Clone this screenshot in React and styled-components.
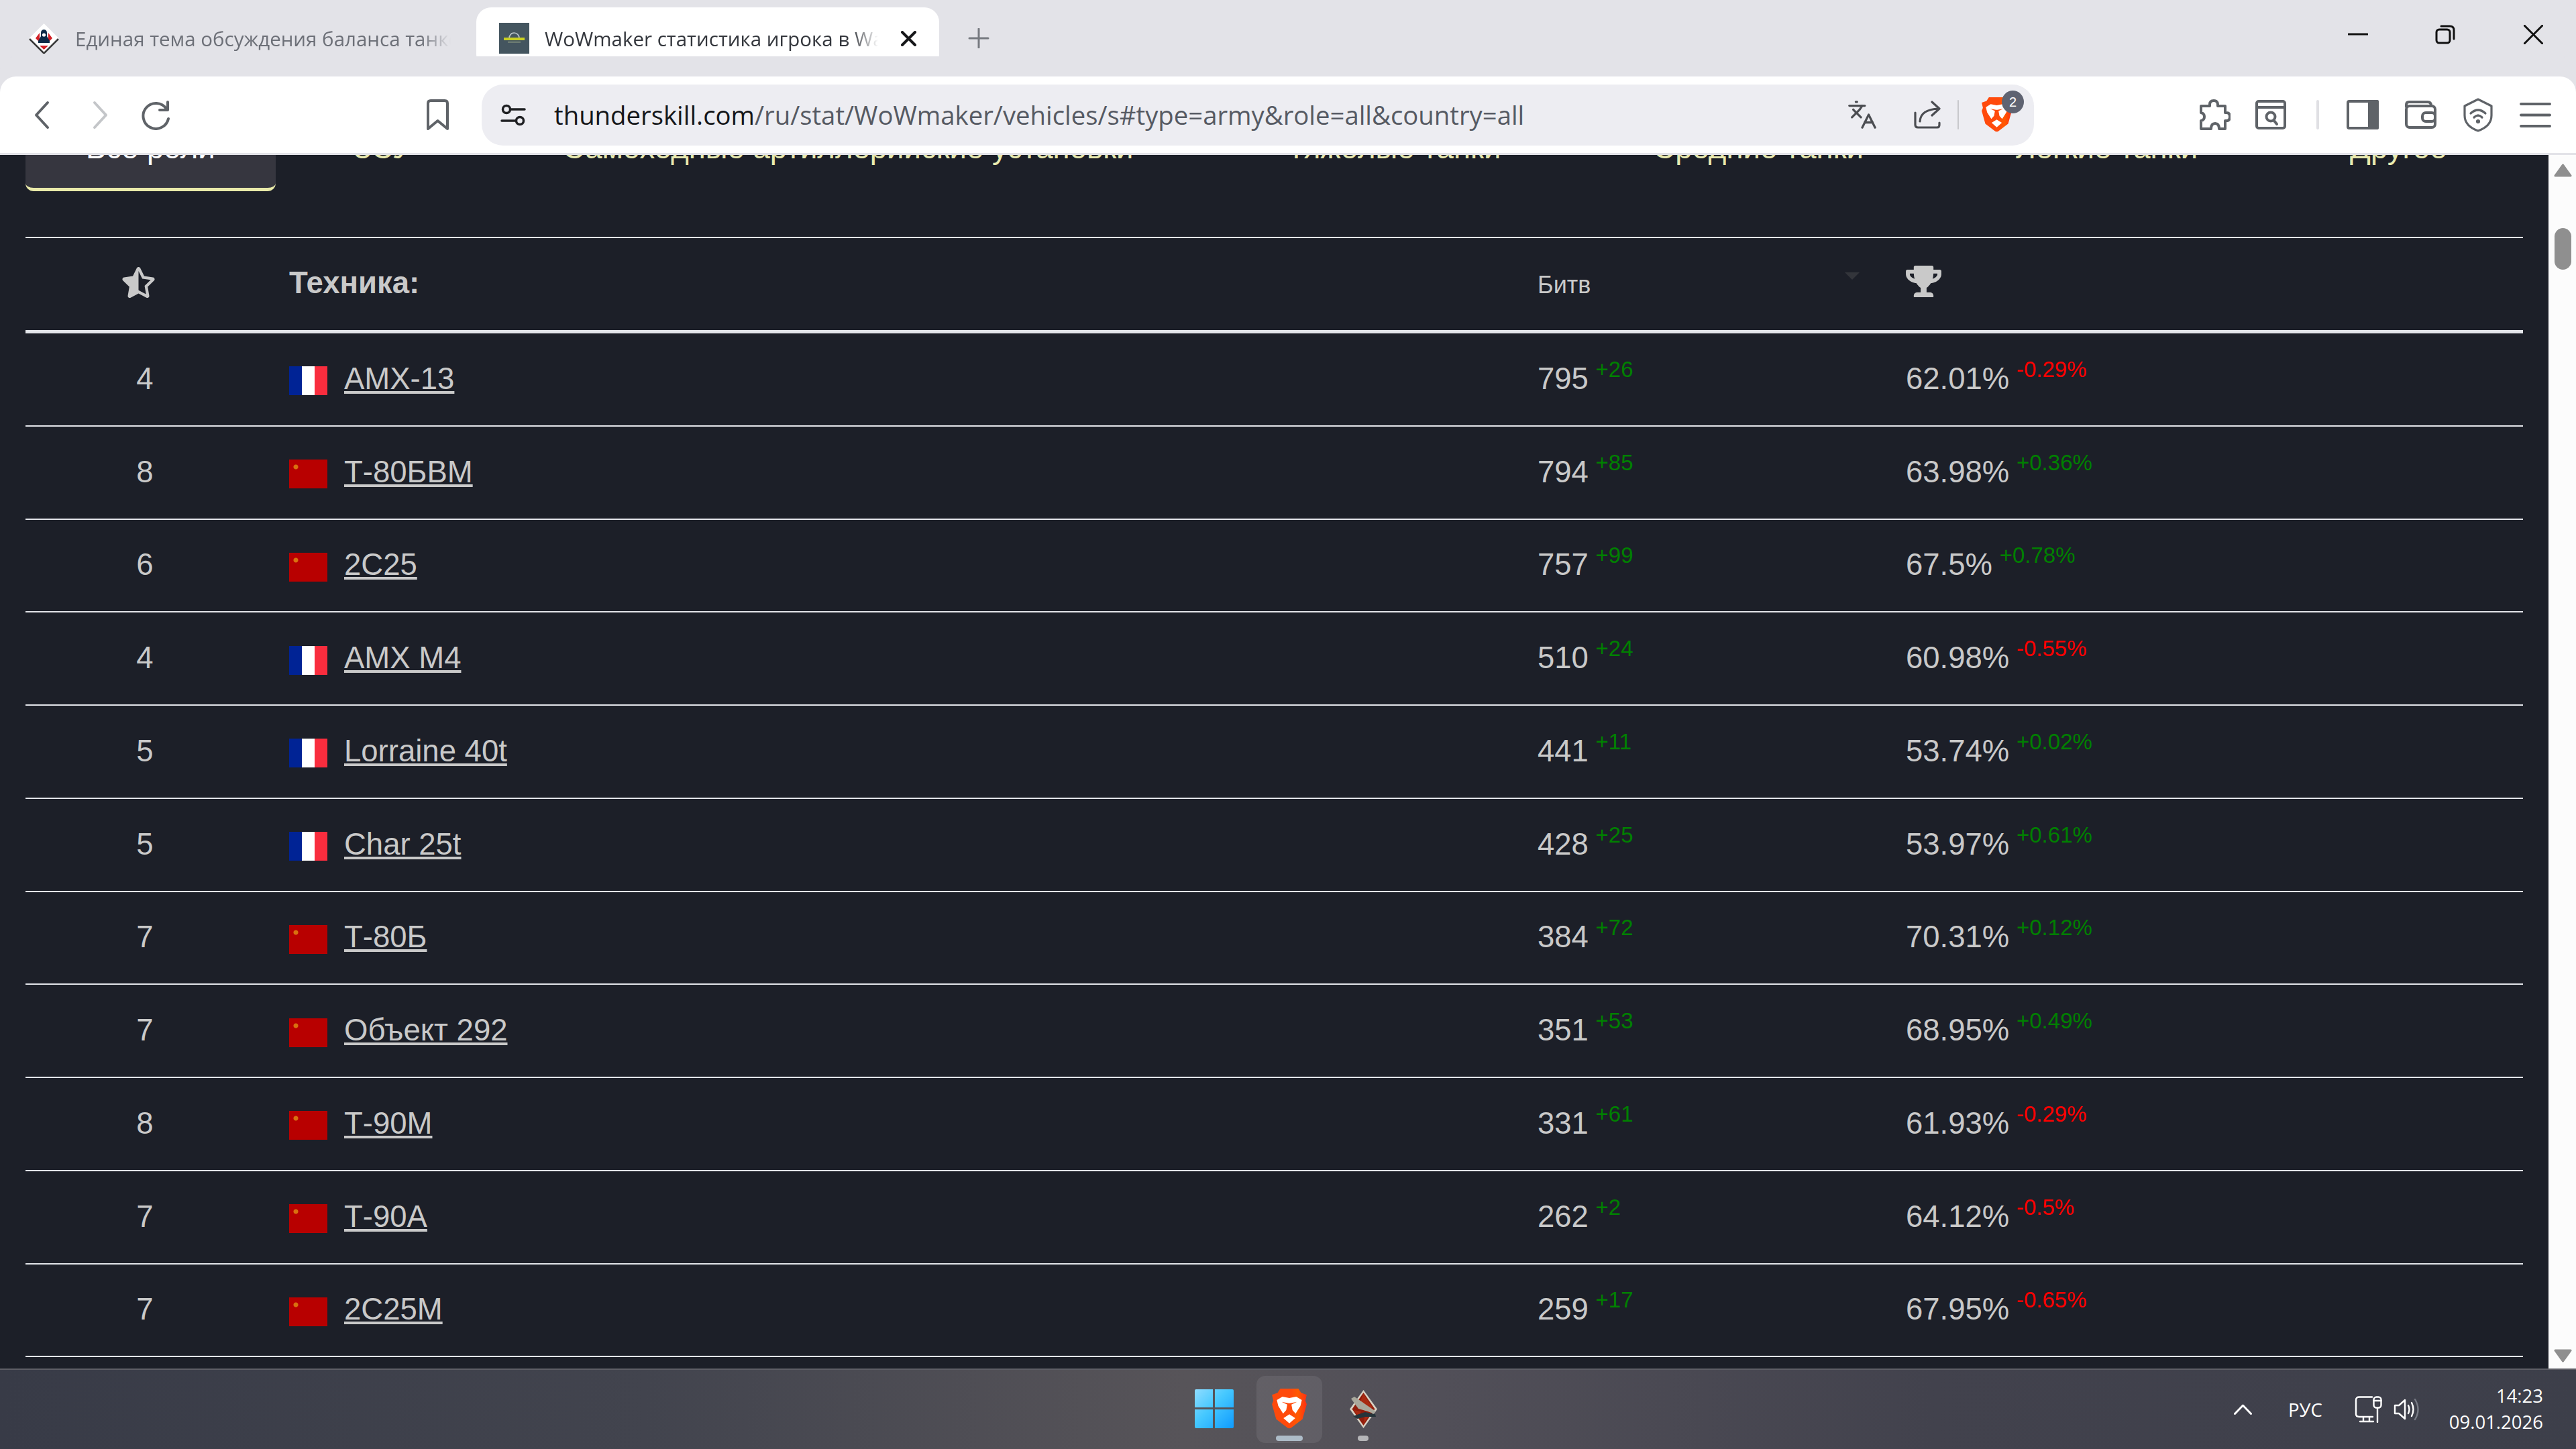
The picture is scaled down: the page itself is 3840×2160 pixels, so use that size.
import React from "react";
import styled, { createGlobalStyle } from "styled-components";
import { FaStarHalfAlt, FaTrophy } from "react-icons/fa";
import { Languages } from "lucide-react";

const ROWS = [
  { rank: 4, flag: "fr", name: "AMX-13", battles: 795, battlesDiff: "+26", win: "62.01%", winDiff: "-0.29%" },
  { rank: 8, flag: "su", name: "Т-80БВМ", battles: 794, battlesDiff: "+85", win: "63.98%", winDiff: "+0.36%" },
  { rank: 6, flag: "su", name: "2С25", battles: 757, battlesDiff: "+99", win: "67.5%", winDiff: "+0.78%" },
  { rank: 4, flag: "fr", name: "AMX M4", battles: 510, battlesDiff: "+24", win: "60.98%", winDiff: "-0.55%" },
  { rank: 5, flag: "fr", name: "Lorraine 40t", battles: 441, battlesDiff: "+11", win: "53.74%", winDiff: "+0.02%" },
  { rank: 5, flag: "fr", name: "Char 25t", battles: 428, battlesDiff: "+25", win: "53.97%", winDiff: "+0.61%" },
  { rank: 7, flag: "su", name: "Т-80Б", battles: 384, battlesDiff: "+72", win: "70.31%", winDiff: "+0.12%" },
  { rank: 7, flag: "su", name: "Объект 292", battles: 351, battlesDiff: "+53", win: "68.95%", winDiff: "+0.49%" },
  { rank: 8, flag: "su", name: "Т-90М", battles: 331, battlesDiff: "+61", win: "61.93%", winDiff: "-0.29%" },
  { rank: 7, flag: "su", name: "Т-90А", battles: 262, battlesDiff: "+2", win: "64.12%", winDiff: "-0.5%" },
  { rank: 7, flag: "su", name: "2С25М", battles: 259, battlesDiff: "+17", win: "67.95%", winDiff: "-0.65%" },
];

const ROLE_TABS = [
  { label: "Все роли", active: true, gap: 0 },
  { label: "ЗСУ", gap: 26 },
  { label: "Самоходные артиллерийские установки", gap: 45 },
  { label: "Тяжёлые танки", gap: 49 },
  { label: "Средние танки", gap: 47 },
  { label: "Лёгкие танки", gap: 47 },
  { label: "Другое", gap: 47 },
];

const GlobalStyle = createGlobalStyle`
  html, body {
    margin: 0;
    padding: 0;
    background: #1c1f28;
  }
`;

const Screen = styled.div`
  width: 3840px;
  height: 2160px;
  display: flex;
  flex-direction: column;
  overflow: hidden;
  font-family: "Liberation Sans", Arial, sans-serif;
`;

const TabStrip = styled.div`
  height: 114px;
  flex: none;
  display: flex;
  align-items: center;
  background: #e3e3e8;
  font-family: "Open Sans", "Noto Sans", sans-serif;
  font-size: 29.5px;
`;

const BrowserTab = styled.div`
  display: flex;
  align-items: center;
  height: 92px;
  box-sizing: border-box;
  border-radius: 22px;
  margin-top: 0;
  width: ${(p) => p.$width}px;
  margin-left: ${(p) => p.$left}px;
  padding-left: ${(p) => p.$pad}px;
  background: ${(p) => (p.$current ? "#fff" : "transparent")};
  color: ${(p) => (p.$current ? "#34373d" : "#6d7078")};
`;

const TabTitle = styled.span`
  width: ${(p) => p.$width}px;
  margin-left: ${(p) => p.$left}px;
  overflow: hidden;
  white-space: nowrap;
  -webkit-mask-image: linear-gradient(90deg, #000 92%, transparent);
  mask-image: linear-gradient(90deg, #000 92%, transparent);
`;

const Glyph = styled.svg`
  flex: none;
  display: block;
  width: ${(p) => p.$w}px;
  height: ${(p) => p.$h}px;
  margin-left: ${(p) => p.$ml || 0}px;
  fill: none;
  stroke: ${(p) => p.$color || "#5f6368"};
  stroke-width: ${(p) => p.$sw || 4};
  stroke-linecap: round;
  stroke-linejoin: round;
`;

const WindowControls = styled.div`
  margin-left: auto;
  display: flex;
  align-items: center;
  padding-right: 49px;
  margin-top: -12px;
`;

const Toolbar = styled.div`
  height: 114px;
  flex: none;
  display: flex;
  align-items: center;
  padding-left: 50px;
  background: #fff;
  border-radius: 24px 24px 0 0;
  border-bottom: 3px solid #e3e3e8;
  box-shadow: 0 -30px 0 #e3e3e8;
  position: relative;
`;

const AddressBar = styled.div`
  width: 2314px;
  height: 91px;
  margin-left: 48px;
  padding-left: 27px;
  padding-right: 17px;
  box-sizing: border-box;
  display: flex;
  align-items: center;
  background: #ededf2;
  border-radius: 32px;
  position: relative;
`;

const Url = styled.div`
  margin-left: 41px;
  font-family: "Open Sans", "Noto Sans", sans-serif;
  font-size: 38.3px;
  color: #565a63;
  white-space: nowrap;
  b {
    font-weight: 400;
    color: #15171a;
  }
`;

const AddressIcons = styled.div`
  margin-left: auto;
  display: flex;
  align-items: center;
`;

const Divider = styled.div`
  flex: none;
  width: ${(p) => p.$w}px;
  height: 44px;
  margin-left: ${(p) => p.$ml}px;
  background: ${(p) => p.$color};
  border-radius: 2px;
`;

const ShieldWrap = styled.div`
  position: relative;
  margin-left: 34px;
  margin-right: 16px;
`;

const ShieldBadge = styled.span`
  position: absolute;
  top: -10px;
  right: -18px;
  width: 33px;
  height: 34px;
  border-radius: 50%;
  background: #5f6371;
  color: #fff;
  font-size: 20px;
  line-height: 34px;
  text-align: center;
`;

const Viewport = styled.div`
  flex: 1;
  min-height: 0;
  display: grid;
  grid-template-columns: 1fr 41px;
`;

const Content = styled.main`
  overflow: hidden;
  padding: 0 38px;
  background: #1c1f28;
`;

const RoleTabs = styled.nav`
  display: flex;
  margin-top: -60px;
  height: 114px;
`;

const RoleTab = styled.div`
  box-sizing: border-box;
  height: 114px;
  padding: 0 90px 9px;
  margin-left: ${(p) => p.$gap}px;
  display: flex;
  align-items: center;
  font-size: 45.5px;
  white-space: nowrap;
  color: ${(p) => (p.$active ? "#fff" : "#e9eab0")};
  background: ${(p) => (p.$active ? "#36363f" : "transparent")};
  border-bottom: 5px solid ${(p) => (p.$active ? "#e9eaa9" : "transparent")};
  border-radius: 0 0 12px 12px;
`;

const Table = styled.section`
  margin-top: 68px;
  border-top: 2px solid #e3e5ea;
  color: #c9c9c9;
  font-size: 45.5px;
`;

const Columns = styled.div`
  display: grid;
  grid-template-columns: 393px 1861px 549px 1fr;
  box-sizing: border-box;
`;

const HeadRow = styled(Columns)`
  height: 142px;
  border-bottom: 5px solid #e3e5ea;
  align-items: center;
`;

const Row = styled(Columns)`
  height: 138.75px;
  border-bottom: 2px solid #e3e5ea;
  align-items: center;
  padding-bottom: 1px;
`;

const StarCell = styled.div`
  padding-left: 144px;
  margin-top: -6px;
  svg {
    display: block;
    width: 49px;
    height: 46px;
  }
`;

const VehicleHead = styled.div`
  font-weight: 700;
  font-size: 45.5px;
  margin-top: -4px;
`;

const BattlesHead = styled.div`
  display: flex;
  align-items: center;
  justify-content: space-between;
  padding-right: 69px;
  margin-top: 2px;
  font-size: 36px;
`;

const SortArrow = styled.span`
  width: 0;
  height: 0;
  margin-top: -26px;
  border-left: 11px solid transparent;
  border-right: 11px solid transparent;
  border-top: 11px solid #33353b;
`;

const TrophyCell = styled.div`
  margin-top: -8px;
  svg {
    display: block;
    width: 53px;
    height: 47px;
  }
`;

const Rank = styled.div`
  width: 356px;
  text-align: center;
`;

const Vehicle = styled.div`
  display: flex;
  align-items: center;
`;

const Flag = styled.span`
  flex: none;
  width: 57px;
  height: 43px;
  margin-top: 6px;
  margin-right: 25px;
  background: ${(p) =>
    p.$code === "fr"
      ? "linear-gradient(90deg, #002395 0 33%, #fff 33% 66%, #f92d3e 66%)"
      : "radial-gradient(circle at 10px 11px, #d9700f 0 3px, transparent 4px), #b80000"};
`;

const VehicleLink = styled.a`
  color: #c9c9c9;
  text-decoration: underline;
`;

const Diff = styled.sup`
  font-size: 33px;
  line-height: 0;
  vertical-align: 18px;
  margin-left: -2px;
  color: ${(p) => (p.$up ? "#008000" : "#ff0000")};
`;

const Scrollbar = styled.aside`
  background: #fcfcfc;
  display: flex;
  flex-direction: column;
  align-items: center;
  position: relative;
  padding-top: 13px;
`;

const ScrollThumb = styled.div`
  width: 25px;
  height: 62px;
  margin-top: 76px;
  margin-left: 1px;
  border-radius: 13px;
  background: #8f8f8f;
`;

const ScrollArrow = styled.svg`
  width: 27px;
  height: 20px;
  margin-left: 1px;
  fill: #8f8f8f;
  stroke: #8f8f8f;
  stroke-width: 3;
  stroke-linejoin: round;
  margin-top: ${(p) => (p.$down ? "auto" : "0")};
  margin-bottom: ${(p) => (p.$down ? "9px" : "0")};
`;

const Taskbar = styled.footer`
  height: 120px;
  flex: none;
  box-sizing: border-box;
  display: grid;
  grid-template-columns: 1fr auto 1fr;
  align-items: center;
  border-top: 2px solid #5e5e66;
  background: linear-gradient(90deg, #383b47 0%, #42444e 25%, #575459 46%, #514f58 56%, #42424d 75%, #3d3f4a 100%);
`;

const TaskIcons = styled.div`
  grid-column: 2;
  display: flex;
  align-items: center;
`;

const TaskSlot = styled.div`
  position: relative;
  box-sizing: border-box;
  width: ${(p) => p.$w}px;
  height: 100px;
  display: flex;
  align-items: center;
  justify-content: center;
  border-radius: 13px;
  background: ${(p) => (p.$open ? "rgba(255,255,255,.08)" : "transparent")};
  svg {
    margin-top: -2px;
  }
`;

const TaskDot = styled.span`
  position: absolute;
  bottom: 3px;
  left: 50%;
  transform: translateX(-50%);
  width: ${(p) => p.$w}px;
  height: 8px;
  border-radius: 4px;
  background: ${(p) => p.$color};
`;

const Tray = styled.div`
  display: flex;
  align-items: center;
  justify-content: flex-end;
  padding-right: 49px;
  color: #fff;
  font-family: "Open Sans", "Noto Sans", sans-serif;
  font-size: 27.5px;
`;

const TrayLang = styled.span`
  margin-left: 54px;
`;

const Clock = styled.div`
  margin-left: 44px;
  margin-top: -3px;
  text-align: right;
  line-height: 39px;
`;

const BraveLogo = ({ width, height }) => (
  <svg width={width} height={height} viewBox="0 0 100 116" style={{ display: "block" }}>
    <defs>
      <linearGradient id="braveFill" x1="0" x2="1" y1="0" y2="0">
        <stop offset="0" stopColor="#ff4a0c" />
        <stop offset="0.55" stopColor="#ff4a0c" />
        <stop offset="0.75" stopColor="#ff5a00" />
        <stop offset="1" stopColor="#ff2f14" />
      </linearGradient>
    </defs>
    <path
      d="M24 0H76L84 12L100 18L96 35L100 45L88 88L55 113Q50 116 45 113L12 88L0 45L4 35L0 18L16 12Z"
      fill="url(#braveFill)"
    />
    <path
      d="M14 33L30 23L50 27L70 23L86 33L82 50L68 72L59 62L56 46L72 38L52 42H48L28 38L44 46L41 62L32 72L18 50Z"
      fill="#fff"
    />
    <path d="M50 74L33 85L50 100L67 85Z" fill="#fff" />
  </svg>
);

const WindowsLogo = () => (
  <svg width="58" height="58" viewBox="0 0 58 58" style={{ display: "block" }}>
    <defs>
      <linearGradient id="winFill" x1="0" y1="0" x2="1" y2="1">
        <stop offset="0" stopColor="#8fdcff" />
        <stop offset="0.45" stopColor="#45c8ff" />
        <stop offset="1" stopColor="#0f9bff" />
      </linearGradient>
    </defs>
    <path d="M2 0H27V27H0V2Q0 0 2 0ZM30 0H56Q58 0 58 2V27H30ZM0 30H27V58H2Q0 58 0 56ZM30 30H58V56Q58 58 56 58H30Z" fill="url(#winFill)" />
  </svg>
);

const ForumIcon = () => (
  <svg width="45" height="45" viewBox="0 0 45 45" style={{ display: "block", flex: "none" }}>
    <path d="M22.5 0L45 22.5L22.5 45L0 22.5Z" fill="#fff" />
    <path d="M1 23L22.5 44.5L44 23" fill="none" stroke="#3a3a3a" strokeWidth="2.5" />
    <path d="M10 22L16 14V28ZM35 22L29 14V28ZM16 33H29L22.5 39Z" fill="#d21f26" />
    <path d="M22.5 9A5 5 0 0 1 27 14V19L31 26V29H14V26L18 19V14A5 5 0 0 1 22.5 9Z" fill="#0e2a47" />
    <circle cx="22.5" cy="17" r="2.6" fill="#fff" />
  </svg>
);

const ThunderFavicon = () => (
  <svg width="45" height="46" viewBox="0 0 45 46" style={{ display: "block", flex: "none" }}>
    <rect width="45" height="46" fill="#44555f" />
    <path d="M15 23A7.5 8 0 0 1 30 23" fill="none" stroke="#b9c4c8" strokeWidth="1.6" />
    <rect x="7" y="22" width="31" height="4" fill="#c8cf22" />
    <rect x="13" y="28" width="19" height="1.5" fill="#8b9a80" />
  </svg>
);

const GameIcon = () => (
  <svg width="43" height="59" viewBox="0 0 43 59" style={{ display: "block" }}>
    <path d="M21.5 1L42 29.5L21.5 58L1 29.5Z" fill="#d8d2c4" />
    <path d="M21.5 5L38.5 29.5L21.5 54L4.5 29.5Z" fill="#8f1d0c" />
    <path d="M21.5 7L14 24L27 31L35 27ZM7 31L18 33L14 41ZM24 38L34 33L21 52Z" fill="#a82a12" />
    <path d="M3 14L8 11L40 33L36 36L28 33L14 29Z" fill="#a9a89c" />
    <path d="M6 40L24 34L39 37L40 41L24 41L12 44Z" fill="#25343a" />
  </svg>
);

const StrokeIcons = {
  back: { w: 25, h: 43, d: <path d="M21 3L4 21.5L21 40" /> },
  forward: { w: 25, h: 43, d: <path d="M4 3L21 21.5L4 40" /> },
  reload: {
    w: 48,
    h: 45,
    d: (
      <>
        <path d="M40 13A19 19 0 1 0 43 28" />
        <path d="M42 3V15H30" />
      </>
    ),
  },
  bookmark: { w: 35, h: 47, d: <path d="M3 6Q3 2 7 2H28Q32 2 32 6V44L17.5 32L3 44Z" /> },
  tune: {
    w: 40,
    h: 33,
    d: (
      <>
        <circle cx="10" cy="8" r="5.5" />
        <path d="M16 8H37M3 25H24" />
        <circle cx="30" cy="25" r="5.5" />
      </>
    ),
  },
  share: {
    w: 42,
    h: 42,
    d: (
      <>
        <path d="M3 18V36Q3 40 7 40H36Q39 40 39 36V33" />
        <path d="M10 31Q11 13 38 12M28 2L39 12L28 22" />
      </>
    ),
  },
  puzzle: {
    w: 50,
    h: 48,
    d: <path d="M19 9Q19 3 25 3Q31 3 31 9V11H42V21H44Q49 21 49 27Q49 33 44 33H42V45H33Q33 37 27 37Q21 37 21 45H6V33Q11 32 11 27Q11 22 6 21V11H19Z" />,
  },
  reader: {
    w: 46,
    h: 44,
    d: (
      <>
        <rect x="2" y="2" width="42" height="40" rx="3" />
        <path d="M2 11H44M28 31L32 36" />
        <circle cx="23" cy="25" r="6.5" />
      </>
    ),
  },
  sidebar: {
    w: 48,
    h: 44,
    d: (
      <>
        <rect x="2" y="2" width="44" height="40" rx="2" />
        <rect x="34" y="2" width="12" height="40" fill="#5f6368" />
      </>
    ),
  },
  wallet: {
    w: 47,
    h: 42,
    d: (
      <>
        <path d="M2 9V6Q2 2 6 2H34Q39 2 39 8" />
        <rect x="2" y="8" width="43" height="32" rx="5" />
        <rect x="26" y="18" width="19" height="13" rx="5" />
      </>
    ),
  },
  vpn: {
    w: 44,
    h: 51,
    d: (
      <>
        <path d="M22 2L42 12V26Q42 42 22 49Q2 42 2 26V12Z" />
        <path d="M11 23Q22 13 33 23M16 29Q22 23 28 29" />
        <circle cx="22" cy="35" r="1.5" />
      </>
    ),
  },
  menu: { w: 47, h: 39, d: <path d="M2 3H45M2 19.5H45M2 36H45" /> },
  close: { w: 25, h: 23, d: <path d="M3 2L22 21M22 2L3 21" /> },
  plus: { w: 32, h: 30, d: <path d="M16 1V29M2 15H30" /> },
  minimize: { w: 30, h: 4, d: <path d="M1 2H29" /> },
  restore: {
    w: 30,
    h: 29,
    d: (
      <>
        <rect x="2" y="7" width="20" height="20" rx="4" />
        <path d="M9 2H22Q28 2 28 8V21" />
      </>
    ),
  },
  winClose: { w: 29, h: 29, d: <path d="M1 1L28 28M28 1L1 28" /> },
  chevronUp: { w: 27, h: 16, d: <path d="M1.5 14.5L13.5 2L25.5 14.5" /> },
  network: {
    w: 41,
    h: 40,
    d: (
      <>
        <path d="M26 1.5H7Q2 1.5 2 6V27Q2 31 7 31H27M13 31V38M22 31V38M8 38H28M34 18V39" />
        <rect x="28.5" y="1.5" width="11" height="16" rx="4" />
        <path d="M28.5 7H39.5" />
      </>
    ),
  },
};

const Icon = ({ name, color, sw, ml }) => {
  const { w, h, d } = StrokeIcons[name];
  return (
    <Glyph viewBox={`0 0 ${w} ${h}`} $w={w} $h={h} $color={color} $sw={sw} $ml={ml}>
      {d}
    </Glyph>
  );
};

const SpeakerIcon = () => (
  <Glyph viewBox="0 0 39 36" $w={39} $h={36} $color="#fff" $sw={2.4} $ml={17}>
    <path d="M2 12H8L17 4V32L8 24H2Z" />
    <path d="M22 12Q25 18 22 24M27 8Q32 18 27 28" />
    <path d="M32 3Q41 18 32 33" stroke="#777a84" />
  </Glyph>
);

const TopBars = () => (
  <>
    <TabStrip>
      <BrowserTab $left={43} $width={667} $pad={0}>
        <ForumIcon />
        <TabTitle $left={24} $width={560}>Единая тема обсуждения баланса танков</TabTitle>
      </BrowserTab>
      <BrowserTab $current $left={0} $width={690} $pad={34}>
        <ThunderFavicon />
        <TabTitle $left={23} $width={497}>WoWmaker статистика игрока в War Thunder</TabTitle>
        <Icon name="close" color="#17181a" ml={33} />
      </BrowserTab>
      <Icon name="plus" color="#777a80" sw={3} ml={43} />
      <WindowControls>
        <Icon name="minimize" color="#111" sw={3} />
        <Icon name="restore" color="#111" sw={3} ml={100} />
        <Icon name="winClose" color="#111" sw={3} ml={102} />
      </WindowControls>
    </TabStrip>
    <Toolbar>
      <Icon name="back" />
      <Icon name="forward" color="#c4c6c9" ml={62} />
      <Icon name="reload" ml={46} />
      <Icon name="bookmark" ml={379} />
      <AddressBar>
        <Icon name="tune" color="#1f2023" sw={3.5} />
        <Url>
          <b>thunderskill.com</b>/ru/stat/WoWmaker/vehicles/s#type=army&amp;role=all&amp;country=all
        </Url>
        <AddressIcons>
          <Languages size={46} color="#4b4d52" strokeWidth={1.7} />
          <Icon name="share" color="#4b4d52" sw={3.2} ml={53} />
          <Divider $w={2} $ml={24} $color="#c8c8cc" />
          <ShieldWrap>
            <BraveLogo width={45} height={52} />
            <ShieldBadge>2</ShieldBadge>
          </ShieldWrap>
        </AddressIcons>
      </AddressBar>
      <Icon name="puzzle" ml={243} />
      <Icon name="reader" ml={37} />
      <Divider $w={4} $ml={45} $color="#e0e0e4" />
      <Icon name="sidebar" ml={41} />
      <Icon name="wallet" ml={39} />
      <Icon name="vpn" sw={3.2} ml={40} />
      <Icon name="menu" ml={40} />
    </Toolbar>
  </>
);

const RoleTabsRow = () => (
  <RoleTabs>
    {ROLE_TABS.map((tab) => (
      <RoleTab key={tab.label} $active={tab.active} $gap={tab.gap}>
        {tab.label}
      </RoleTab>
    ))}
  </RoleTabs>
);

const StatsTable = () => (
  <Table>
    <HeadRow>
      <StarCell>
        <FaStarHalfAlt color="#c9c9c9" />
      </StarCell>
      <VehicleHead>Техника:</VehicleHead>
      <BattlesHead>
        Битв
        <SortArrow />
      </BattlesHead>
      <TrophyCell>
        <FaTrophy color="#c9c9c9" />
      </TrophyCell>
    </HeadRow>
    {ROWS.map((row) => (
      <Row key={row.name}>
        <Rank>{row.rank}</Rank>
        <Vehicle>
          <Flag $code={row.flag} />
          <VehicleLink href="#">{row.name}</VehicleLink>
        </Vehicle>
        <div>
          {row.battles} <Diff $up>{row.battlesDiff}</Diff>
        </div>
        <div>
          {row.win} <Diff $up={row.winDiff.startsWith("+")}>{row.winDiff}</Diff>
        </div>
      </Row>
    ))}
  </Table>
);

const TaskbarRow = () => (
  <Taskbar>
    <TaskIcons>
      <TaskSlot $w={126}>
        <WindowsLogo />
      </TaskSlot>
      <TaskSlot $w={98} $open>
        <BraveLogo width={52} height={60} />
        <TaskDot $w={40} $color="#adbcc8" />
      </TaskSlot>
      <TaskSlot $w={122}>
        <GameIcon />
        <TaskDot $w={16} $color="#b5b5b8" />
      </TaskSlot>
    </TaskIcons>
    <Tray>
      <Icon name="chevronUp" color="#fff" sw={3} />
      <TrayLang>РУС</TrayLang>
      <Icon name="network" color="#fff" sw={2.4} ml={48} />
      <SpeakerIcon />
      <Clock>
        14:23
        <br />
        09.01.2026
      </Clock>
    </Tray>
  </Taskbar>
);

export default function App() {
  return (
    <>
      <GlobalStyle />
      <Screen>
        <TopBars />
        <Viewport>
          <Content>
            <RoleTabsRow />
            <StatsTable />
          </Content>
          <Scrollbar>
            <ScrollArrow viewBox="0 0 27 20">
              <path d="M13.5 2L25 18H2Z" />
            </ScrollArrow>
            <ScrollThumb />
            <ScrollArrow viewBox="0 0 27 20" $down>
              <path d="M13.5 18L25 2H2Z" />
            </ScrollArrow>
          </Scrollbar>
        </Viewport>
        <TaskbarRow />
      </Screen>
    </>
  );
}
